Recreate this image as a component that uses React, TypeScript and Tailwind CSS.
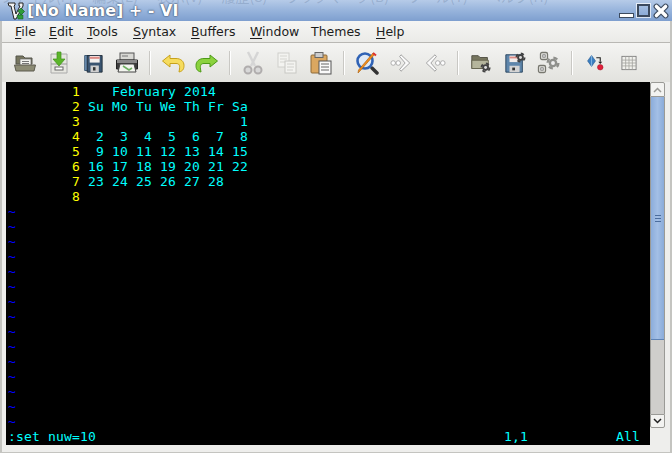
import React from "react";

const mono = "font-['DejaVu_Sans_Mono',monospace]";

const menuItems: [string, string, string][] = [
    ["F", "ile", "w-[34px]"],
    ["E", "dit", "w-[38px]"],
    ["T", "ools", "w-[46px]"],
    ["S", "yntax", "w-[58px]"],
    ["B", "uffers", "w-[59px]"],
    ["W", "indow", "w-[61px]"],
    ["", "Themes", "w-[65px]"],
    ["H", "elp", "w-[40px]"],
];

const calendarRows: string[] = [
    "   February 2014",
    "Su Mo Tu We Th Fr Sa",
    "                   1",
    " 2  3  4  5  6  7  8",
    " 9 10 11 12 13 14 15",
    "16 17 18 19 20 21 22",
    "23 24 25 26 27 28",
    "",
];

const Gear = ({ cx, cy, r, fill = "#555", hole = "#ddd" }: { cx: number; cy: number; r: number; fill?: string; hole?: string }) => (
    <g>
        <circle cx={cx} cy={cy} r={r * 0.9} fill="none" stroke={fill} strokeWidth={r * 0.4} strokeDasharray={`${r * 0.7} ${r * 0.7}`} />
        <circle cx={cx} cy={cy} r={r * 0.72} fill={fill} />
        <circle cx={cx} cy={cy} r={r * 0.32} fill={hole} />
    </g>
);

const OutlineGear = ({ x, y, s }: { x: number; y: number; s: number }) => (
    <g>
        <rect x={x - s / 2} y={y - s / 2} width={s} height={s} rx="1.500" fill="#e8e8e4" stroke="#77776f" strokeWidth="1.300" />
        <rect x={x - s / 6} y={y - s / 6} width={s / 3} height={s / 3} fill="#fff" stroke="#666" strokeWidth="0.8" />
    </g>
);

const OpenIcon = () => (
    <svg width="24" height="24" viewBox="0 0 24 24">
        <path d="M3 5h7l2 2h7v6H3z" fill="#77765f" stroke="#55544a" />
        <rect x="7" y="8" width="11" height="8" fill="#f2f2ee" stroke="#666" strokeWidth="0.7" />
        <path d="M9 10.500h7M9 12.500h7" stroke="#777" />
        <path d="M1.500 14h21l-1.500 6H3z" fill="#8c8b74" stroke="#5c5b4e" />
    </svg>
);

const SaveDownIcon = () => (
    <svg width="24" height="24" viewBox="0 0 24 24">
        <path d="M4 3h16v19H4z" fill="#e6e6e0" stroke="#aaa" />
        <path d="M4 13h16" stroke="#999" />
        <rect x="8" y="16" width="8" height="3" fill="#fff" stroke="#666" />
        <path d="M10 1h4v7h4l-6 7-6-7h4z" fill="#5bb52a" stroke="#3f8f1a" strokeWidth="0.7" />
    </svg>
);

const FloppyIcon = () => (
    <svg width="20" height="20" viewBox="0 0 24 24">
        <path d="M2 3h16v18H2z" fill="#6f93b8" stroke="#2e4a66" />
        <path d="M5 3h18v20H5z" fill="#3a5470" stroke="#1c2733" />
        <rect x="8" y="3.500" width="12" height="8" fill="#f4f0ee" />
        <rect x="8" y="4.500" width="12" height="2.500" fill="#dc8b86" />
        <rect x="9" y="15" width="10" height="8" fill="#cfcfcf" />
        <rect x="12" y="17" width="3" height="4" fill="#333" />
    </svg>
);

const PrintIcon = () => (
    <svg width="24" height="24" viewBox="0 0 24 24">
        <rect x="5" y="2" width="14" height="7" fill="#d8d8d4" stroke="#555" />
        <path d="M7 5h6" stroke="#777" />
        <path d="M1.500 9h21v9h-21z" fill="#3c3c3c" stroke="#222" />
        <path d="M2 9h20v3H2z" fill="#8a8a8a" />
        <path d="M5 13h14l2 8H3z" fill="#f3f5ef" stroke="#444" />
        <path d="M8 15l6 4 3-2" stroke="#6fae62" strokeWidth="1.600" fill="none" />
    </svg>
);

const UndoIcon = () => (
    <svg width="24" height="24" viewBox="0 0 24 24">
        <path d="M9 4L1.500 10 9 16v-3.500h6c3 0 4 1.500 3.500 5.500L18 21c4.500-1 5-4 5-6.500 0-4-3-7-8-7H9z" fill="#f6dc5e" stroke="#c7a11a" strokeLinejoin="round" />
    </svg>
);

const RedoIcon = () => (
    <svg width="24" height="24" viewBox="0 0 24 24">
        <path d="M15 4l7.500 6L15 16v-3.500H9c-3 0-4 1.500-3.500 5.500L6 21c-4.500-1-5-4-5-6.500 0-4 3-7 8-7h6z" fill="#8bd23e" stroke="#4d9a17" strokeLinejoin="round" />
    </svg>
);

const CutIcon = () => (
    <svg width="24" height="24" viewBox="0 0 24 24">
        <path d="M7 1l7 14M17 1l-7 14" stroke="#d5d5d5" strokeWidth="2.400" />
        <circle cx="7" cy="19" r="3.500" fill="#d8d8d8" stroke="#b0adad" strokeWidth="2" />
        <circle cx="17" cy="19" r="3.500" fill="#d8d8d8" stroke="#b0adad" strokeWidth="2" />
    </svg>
);

const CopyIcon = () => (
    <svg width="24" height="24" viewBox="0 0 24 24">
        <rect x="3" y="2" width="11" height="14" fill="#f3f3f0" stroke="#d0d0cc" />
        <path d="M5 5h7M5 8h7M5 11h6" stroke="#d5d5d0" />
        <rect x="10" y="10" width="11" height="12" fill="#f3f3f0" stroke="#c8c8c4" />
        <path d="M12 13h7M12 16h7M12 19h6" stroke="#d0d0cc" />
    </svg>
);

const PasteIcon = () => (
    <svg width="24" height="24" viewBox="0 0 24 24">
        <rect x="2" y="4" width="16" height="18" rx="1" fill="#dba760" stroke="#8d6a38" />
        <rect x="6" y="1.500" width="8" height="5" fill="#ccc" stroke="#666" />
        <rect x="10" y="10" width="12" height="13" fill="#fafafa" stroke="#555" />
        <path d="M12 13h8M12 16h8M12 19h8" stroke="#666" />
    </svg>
);

const FindIcon = () => (
    <svg width="24" height="24" viewBox="0 0 24 24">
        <path d="M17 17l5 5" stroke="#333" strokeWidth="3.500" strokeLinecap="round" />
        <circle cx="10" cy="10" r="7.500" fill="#dfe9f6" stroke="#2f62b5" strokeWidth="2.600" />
        <path d="M20 3L5 20l-2 2 .5-3L18 2z" fill="#f08c1e" stroke="#a85e0c" strokeWidth="0.600" />
        <path d="M18 2l3 2.500" stroke="#d33" strokeWidth="2" />
    </svg>
);

const NextIcon = () => (
    <svg width="22" height="22" viewBox="0 0 24 24">
        <circle cx="3.500" cy="12" r="2.500" fill="#fff" stroke="#a8a8a8" />
        <circle cx="9" cy="12" r="2.500" fill="#fff" stroke="#a8a8a8" />
        <path d="M12 3l9.500 9-9.500 9-1.500-2 6-7-6-7z" fill="#fafafa" stroke="#9d9d9d" strokeLinejoin="round" />
    </svg>
);

const PrevIcon = () => (
    <svg width="22" height="22" viewBox="0 0 24 24">
        <circle cx="20.500" cy="12" r="2.500" fill="#fff" stroke="#a8a8a8" />
        <circle cx="15" cy="12" r="2.500" fill="#fff" stroke="#a8a8a8" />
        <path d="M12 3L2.500 12l9.500 9 1.500-2-6-7 6-7z" fill="#fafafa" stroke="#9d9d9d" strokeLinejoin="round" />
    </svg>
);

const FolderGearIcon = () => (
    <svg width="22" height="22" viewBox="0 0 24 24">
        <path d="M2 4h7l2 2h8v12H2z" fill="#77765f" stroke="#4f4e42" />
        <path d="M2 9h18v9H2z" fill="#b5b59c" stroke="#66654f" />
        <Gear cx={17} cy={17} r={5} fill="#444" />
    </svg>
);

const FloppyGearIcon = () => (
    <svg width="22" height="22" viewBox="0 0 24 24">
        <path d="M2 3h18v19H2z" fill="#5f86ab" stroke="#24415c" />
        <rect x="6" y="4" width="10" height="7" fill="#f1ecea" />
        <rect x="6" y="5" width="10" height="2" fill="#dc8b86" />
        <rect x="6" y="15" width="11" height="7" fill="#d4d4d4" />
        <rect x="9" y="17" width="3" height="3" fill="#333" />
        <Gear cx={18} cy={6} r={5} fill="#3f3f3f" />
    </svg>
);

const GearsIcon = () => (
    <svg width="24" height="24" viewBox="0 0 24 24">
        <OutlineGear x={7} y={5} s={7} />
        <OutlineGear x={5} y={18} s={7} />
        <Gear cx={16} cy={12} r={6} fill="#8f908c" hole="#eee" />
    </svg>
);

const TagIcon = () => (
    <svg width="19" height="19" viewBox="0 0 24 24">
        <path d="M7 3l5 7-5 7-5-7z" fill="#3a7fc2" stroke="#1d4f85" strokeWidth="0.700" />
        <path d="M7 3v14" stroke="#8fc0ea" />
        <path d="M13 6h5v5" stroke="#222" strokeWidth="1.400" fill="none" />
        <path d="M15.500 11h5L18 14z" fill="#222" />
        <circle cx="18" cy="18" r="3.500" fill="#e0203a" stroke="#981426" strokeWidth="0.600" />
    </svg>
);

const TableIcon = () => (
    <svg width="20" height="20" viewBox="0 0 24 24">
        <rect x="3.500" y="4" width="17" height="16" fill="#f1f1ed" stroke="#777" />
        <path d="M3.600 8.500h16.800M3.600 12h16.800M3.600 15.500h16.800M8 4.200v15.600M12 4.200v15.600M16 4.200v15.600" stroke="#a5a5a0" />
    </svg>
);

const VimLogo = () => (
    <svg width="18" height="18" viewBox="0 0 18 18">
        <path d="M1 1h7v2L7 4l2 8 4-8h-1V1h4v3l-7 13H7L4 4H2z" fill="#f4f4f4" stroke="#222" strokeWidth="1" />
        <path d="M11 9l3-3 3.500 3.500-3.500 3.500z" fill="#2f9c3a" stroke="#145c1c" strokeWidth="0.700" />
        <path d="M10 13h6v4h-5z" fill="#2f9c3a" stroke="#145c1c" strokeWidth="0.500" />
    </svg>
);

const ToolButton = ({ children }: { children: React.ReactNode }) => (
    <div className="flex h-[34px] w-[34px] shrink-0 items-center justify-center">{children}</div>
);

const Separator = () => (
    <div className="mx-[5px] h-[24px] w-[2px] shrink-0 border-r border-r-white bg-[#c9c8c4]" />
);

const App = () => {
    return (
        <div className="flex h-[453px] w-[672px] flex-col overflow-hidden bg-[#eeeeec] font-['DejaVu_Sans',sans-serif] text-[#1c1c1c]">
            {/* Title bar */}
            <div className="relative flex h-[21px] shrink-0 items-center overflow-hidden bg-[linear-gradient(#b6cbe8,#9ab6dd_45%,#7e9fcf)] pl-[7px]">
                <div className="absolute -top-[14px] left-0 flex gap-[19px] whitespace-nowrap font-['Noto_Sans_CJK_JP',sans-serif] text-[14px] text-[#5d7597]/30">
                    <span>ファイル(F)</span>
                    <span>編集(E)</span>
                    <span>表示(V)</span>
                    <span>履歴(S)</span>
                    <span>ブックマーク(B)</span>
                    <span>ツール(T)</span>
                    <span>ヘルプ(H)</span>
                </div>
                <VimLogo />
                <span className="relative ml-[2px] text-[16px] leading-[21px] font-bold whitespace-pre text-white [text-shadow:0_0_2px_#33425a,0_0_1px_#33425a]">
                    [No Name] + - VI
                </span>
                {/* Window buttons */}
                <div className="relative ml-auto flex items-center gap-[3px] pr-[3px]">
                    <div className="mt-[10px] h-[5px] w-[15px] border border-[#3c4a5e] bg-white" />
                    <div className="h-[13px] w-[13px] border-2 border-[#3c4a5e] bg-transparent outline outline-white/70" />
                    <svg width="16" height="16" viewBox="0 0 14 14">
                        <path d="M3 3l8 8M11 3l-8 8" stroke="#3c4a5e" strokeWidth="5" strokeLinecap="round" />
                        <path d="M3 3l8 8M11 3l-8 8" stroke="#fff" strokeWidth="3" strokeLinecap="round" />
                    </svg>
                </div>
            </div>

            <div className="flex min-h-0 flex-1 flex-col border-x-2 border-b border-x-[#c4c4c0] border-b-[#c4c4c0]">
                {/* Menu bar */}
                <div className="flex h-[22px] shrink-0 items-center border-b border-b-[#b9b8b4] bg-[linear-gradient(#f5f5f3,#ebebe8)] pl-[13px] text-[12.5px]">
                    {menuItems.map(([key, rest, width]) => (
                        <span key={rest} className={`shrink-0 leading-[22px] whitespace-pre ${width}`}>
                            <span className="underline underline-offset-2">{key}</span>
                            {rest}
                        </span>
                    ))}
                </div>

                {/* Toolbar */}
                <div className="flex h-[39px] shrink-0 items-center bg-[linear-gradient(#f4f4f2,#e2e2de)] pl-[6px]">
                    <ToolButton><OpenIcon /></ToolButton>
                    <ToolButton><SaveDownIcon /></ToolButton>
                    <ToolButton><FloppyIcon /></ToolButton>
                    <ToolButton><PrintIcon /></ToolButton>
                    <Separator />
                    <ToolButton><UndoIcon /></ToolButton>
                    <ToolButton><RedoIcon /></ToolButton>
                    <Separator />
                    <ToolButton><CutIcon /></ToolButton>
                    <ToolButton><CopyIcon /></ToolButton>
                    <ToolButton><PasteIcon /></ToolButton>
                    <Separator />
                    <ToolButton><FindIcon /></ToolButton>
                    <ToolButton><NextIcon /></ToolButton>
                    <ToolButton><PrevIcon /></ToolButton>
                    <Separator />
                    <ToolButton><FolderGearIcon /></ToolButton>
                    <ToolButton><FloppyGearIcon /></ToolButton>
                    <ToolButton><GearsIcon /></ToolButton>
                    <Separator />
                    <ToolButton><TagIcon /></ToolButton>
                    <ToolButton><TableIcon /></ToolButton>
                </div>

                {/* Editor and scrollbar */}
                <div className="flex min-h-0 flex-1 pr-[5px] pb-[7px] pl-[4px]">
                    <div className={`flex-1 bg-black pt-[2px] pl-[2px] text-[13px] leading-[15px] tracking-[0.17px] whitespace-pre ${mono}`}>
                        {calendarRows.map((row, index) => (
                            <div key={index} className="h-[15px]">
                                <span className="text-[#ffff00]">{`        ${index + 1} `}</span>
                                <span className="text-[#00ffff]">{row}</span>
                            </div>
                        ))}
                        {Array.from({ length: 15 }).map((_, index) => (
                            <div key={index} className="h-[15px] text-[#0000ff]">~</div>
                        ))}
                        <div className="flex h-[15px] text-[#00ffff]">
                            <span className="w-[496px]">:set nuw=10</span>
                            <span className="w-[112px]">1,1</span>
                            <span>All</span>
                        </div>
                    </div>
                    <div className="flex w-[15px] flex-col pb-[17px]">
                        <div className="flex h-[15px] shrink-0 items-center justify-center rounded-t-[2px] border border-[#9a9a96] bg-[#f3f3f1]">
                            <svg width="9" height="6" viewBox="0 0 9 6">
                                <path d="M1 5l3.500-3.500L8 5" stroke="#9a9a96" strokeWidth="1.500" fill="none" />
                            </svg>
                        </div>
                        <div className="flex min-h-0 flex-1 flex-col border-x border-x-[#9a9a96] bg-[#cfcecb]">
                            <div className="flex h-[243px] shrink-0 flex-col items-center justify-center gap-[2px] border-b border-b-[#5f83b5] bg-[linear-gradient(90deg,#8caddb,#a3bfe6_50%,#8aabd9)]">
                                <div className="h-px w-[6px] bg-[#4b6d9e]" />
                                <div className="h-px w-[6px] bg-[#4b6d9e]" />
                                <div className="h-px w-[6px] bg-[#4b6d9e]" />
                            </div>
                        </div>
                        <div className="flex h-[14px] shrink-0 items-center justify-center rounded-b-[2px] border border-[#9a9a96] bg-[#f3f3f1]">
                            <svg width="9" height="6" viewBox="0 0 9 6">
                                <path d="M1 1l3.500 3.500L8 1" stroke="#222" strokeWidth="1.500" fill="none" />
                            </svg>
                        </div>
                    </div>
                </div>
            </div>
        </div>
    );
};

export default App;
